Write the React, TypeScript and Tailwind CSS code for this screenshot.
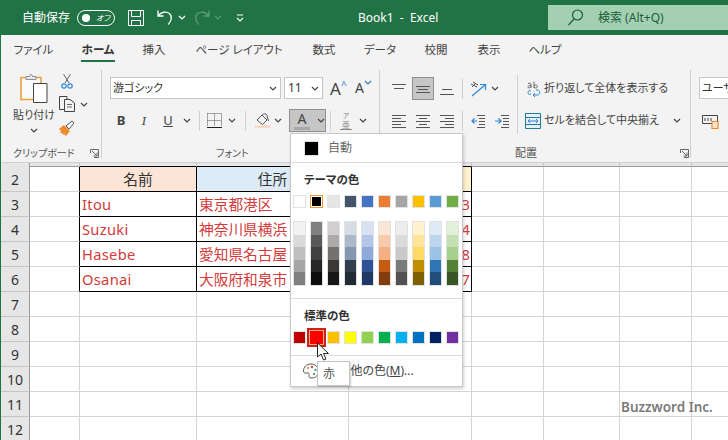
import React from "react";

const theme = [
  ["#ffffff", "#f2f2f2", "#d9d9d9", "#bfbfbf", "#a6a6a6", "#808080"],
  ["#000000", "#808080", "#595959", "#404040", "#262626", "#0d0d0d"],
  ["#e7e6e6", "#d0cece", "#aeaaaa", "#767171", "#3b3838", "#181717"],
  ["#44546a", "#d6dce4", "#adb9ca", "#8497b0", "#333f4f", "#222b35"],
  ["#4472c4", "#d9e2f3", "#b4c6e7", "#8eaadb", "#2f5496", "#1f3864"],
  ["#ed7d31", "#fbe5d5", "#f7caac", "#f4b083", "#c55a11", "#833c0b"],
  ["#a5a5a5", "#ededed", "#dbdbdb", "#c9c9c9", "#7b7b7b", "#525252"],
  ["#ffc000", "#fff2cc", "#fee599", "#ffd965", "#bf8f00", "#7f6000"],
  ["#5b9bd5", "#deeaf6", "#bdd6ee", "#9cc3e5", "#2e75b5", "#1e4e79"],
  ["#70ad47", "#e2efd9", "#c5e0b3", "#a8d08d", "#538135", "#375623"],
];
const standard = ["#c00000", "#ff0000", "#ffc000", "#ffff00", "#92d050", "#00b050", "#00b0f0", "#0070c0", "#002060", "#7030a0"];

const tabs = [
  { label: "ファイル", w: "w-[37px] ml-[14px]" },
  { label: "ホーム", w: "w-[34px] ml-[29px]", active: true },
  { label: "挿入", w: "w-[26px] ml-[26px]" },
  { label: "ページ レイアウト", w: "w-[86px] ml-[29px]" },
  { label: "数式", w: "w-[26px] ml-[29px]" },
  { label: "データ", w: "w-[32px] ml-[27px]" },
  { label: "校閲", w: "w-[26px] ml-[27px]" },
  { label: "表示", w: "w-[26px] ml-[27px]" },
  { label: "ヘルプ", w: "w-[32px] ml-[27px]" },
];

const tableRows: Record<number, string[]> = {
  3: ["Itou", "東京都港区", "3"],
  4: ["Suzuki", "神奈川県横浜", "4"],
  5: ["Hasebe", "愛知県名古屋", "8"],
  6: ["Osanai", "大阪府和泉市", "7"],
};

function Chev({ className = "", color = "#444" }: { className?: string; color?: string }) {
  return (
    <svg width="8" height="5" viewBox="0 0 8 5" className={className} fill="none" stroke={color} strokeWidth="1.2">
      <path d="M1 1l3 3 3-3" />
    </svg>
  );
}

function Lines({ rows }: { rows: [number, number, number][] }) {
  return (
    <svg width="14" height="14" viewBox="0 0 14 14" stroke="#555" strokeWidth="1" fill="none">
      {rows.map(([x1, x2, y]) => (
        <path key={y} d={`M${x1} ${y + 0.5}H${x2}`} />
      ))}
    </svg>
  );
}

function Sep({ className = "" }: { className?: string }) {
  return <div className={`w-px bg-[#cfcfcf] ${className}`} />;
}

function Launcher({ className = "" }: { className?: string }) {
  return (
    <svg width="9" height="9" viewBox="0 0 9 9" className={className} fill="none" stroke="#666" strokeWidth="1">
      <path d="M.5 4V.5H8.500V8.500H4" />
      <path d="M2 2l5 5M7 3.500V7H3.500" />
    </svg>
  );
}

function TitleBar() {
  return (
    <div className="flex h-[35px] items-center bg-[#217346] text-white">
      <span className="ml-[22px] w-[48px] text-[12px] whitespace-nowrap">自動保存</span>
      <div className="ml-[7px] flex h-[16px] w-[38px] items-center rounded-full border border-white pl-[4px]">
        <div className="h-[8px] w-[8px] rounded-full bg-white" />
        <span className="ml-[6px] text-[8px] italic leading-none whitespace-nowrap">オフ</span>
      </div>
      <svg width="16" height="16" viewBox="0 0 16 16" className="ml-[13px]" fill="none" stroke="#fff" strokeWidth="1">
        <path d="M.5.500H15.500V15.500H.5z" />
        <path d="M3.500.500V6.500H12.500V.500M3.500 15.500V10.500H12.500V15.500" />
      </svg>
      <svg width="16" height="17" viewBox="0 0 16 17" className="ml-[13px]" fill="none" stroke="#fff" strokeWidth="1.3">
        <path d="M1 1.500V7H6.500" />
        <path d="M1.500 6.500C4 3 9 2 12.500 4.500c3 3 2 8-1.500 11" />
      </svg>
      <Chev color="#fff" className="ml-[5px]" />
      <svg width="16" height="17" viewBox="0 0 16 17" className="ml-[8px]" fill="none" stroke="#5c9c79" strokeWidth="1.3">
        <path d="M15 1.500V7H9.500" />
        <path d="M14.500 6.500C12 3 7 2 3.500 4.500c-3 3-2 8 1.500 11" />
      </svg>
      <Chev color="#5c9c79" className="ml-[4px]" />
      <svg width="8" height="8" viewBox="0 0 8 8" className="ml-[14px]" fill="none" stroke="#fff" strokeWidth="1.2">
        <path d="M1 1H7M1 4l3 3 3-3" />
      </svg>
      <span className="ml-[114px] w-[86px] text-[12px] whitespace-nowrap">Book1&nbsp; -&nbsp; Excel</span>
      <div className="mb-[5px] ml-[104px] flex h-[25px] flex-1 self-end items-center bg-[#a3d0b3] text-[#1b5e3a]">
        <svg width="17" height="17" viewBox="0 0 17 17" className="ml-[19px]" fill="none" stroke="#1b5e3a" strokeWidth="1.2">
          <circle cx="10.500" cy="6" r="5" />
          <path d="M7 10L1.500 16" />
        </svg>
        <span className="ml-[14px] text-[12px] whitespace-nowrap">検索 (Alt+Q)</span>
      </div>
    </div>
  );
}

function Tabs() {
  return (
    <div className="flex h-[30px] text-[11.5px] text-[#444]">
      {tabs.map((t) => (
        <div key={t.label} className={`relative flex h-[30px] items-center justify-center pb-[1px] whitespace-nowrap ${t.w} ${t.active ? "font-bold text-[#333]" : ""}`}>
          {t.label}
          {t.active && <div className="absolute bottom-[3px] left-0 h-[2px] w-full bg-[#217346]" />}
        </div>
      ))}
    </div>
  );
}

function Clipboard() {
  return (
    <div className="flex h-[88px] w-[101px] shrink-0 flex-col border-r border-[#cfcfcf]">
      <div className="flex h-[76px] shrink-0">
        <div className="ml-[10px] flex w-[46px] flex-col items-center">
          <svg width="28" height="31" viewBox="0 0 28 31" className="mt-[2px]" fill="none">
            <path d="M1 5.500H21V27.500H1z" stroke="#e8a33d" strokeWidth="1.600" fill="#fafafa" />
            <path d="M6 7.500V4.500H9.500C10 1.500 12 1.500 12.500 4.500H16V7.500z" fill="#e8e8e8" stroke="#777" strokeWidth=".8" />
            <path d="M13.500 11.500H27V30.500H13.500z" fill="#fff" stroke="#444" strokeWidth="1" />
          </svg>
          <span className="mt-[4px] text-[11px] leading-[15px] text-[#444] whitespace-nowrap">貼り付け</span>
          <Chev className="mt-[6px]" />
        </div>
        <div className="flex w-[20px] flex-col items-center">
          <svg width="12" height="16" viewBox="0 0 12 16" className="mt-[3px]" fill="none">
            <path d="M2.500 1L8 10M9.500 1L4 10" stroke="#666" strokeWidth="1" />
            <circle cx="3" cy="13" r="2.200" stroke="#2b88d8" strokeWidth="1.200" />
            <circle cx="9" cy="13" r="2.200" stroke="#2b88d8" strokeWidth="1.200" />
          </svg>
          <svg width="16" height="16" viewBox="0 0 16 16" className="mt-[7px]" fill="none" stroke="#444" strokeWidth="1">
            <path d="M5 13.500H.5V.5H8V3" />
            <path d="M5.500 3.500H11L15.500 7V15.500H5.500z" fill="#f3f3f3" />
            <path d="M8 8.500H13M8 11H13" strokeWidth=".8" />
          </svg>
          <svg width="16" height="16" viewBox="0 0 16 16" className="mt-[8px]">
            <path d="M0 9l5-4 6 6-4 5-2-2-1 1-1-2-2 0 1-2z" fill="#ed8b2f" />
            <path d="M7 6l6-5 2 2-5 6z" fill="#fff" stroke="#555" strokeWidth="1" />
          </svg>
        </div>
        <Chev className="ml-[3px] mt-[32px]" />
      </div>
      <div className="flex h-[14px] shrink-0 items-center text-[10px] text-[#555]">
        <span className="ml-[12px] w-[60px] whitespace-nowrap">クリップボード</span>
        <Launcher className="ml-[17px]" />
      </div>
    </div>
  );
}

function FontGroup() {
  return (
    <div className="flex h-[88px] w-[278px] shrink-0 flex-col border-r border-[#cfcfcf] pl-[8px]">
      <div className="mt-[7px] flex h-[22px] shrink-0 items-center">
        <div className="flex h-[22px] w-[171px] items-center justify-between border border-[#c6c6c6] bg-white pl-[2px] pr-[3px] text-[11px] text-[#333]">
          <span className="whitespace-nowrap">游ゴシック</span>
          <Chev />
        </div>
        <div className="ml-[3px] flex h-[22px] w-[39px] items-center justify-between border border-[#c6c6c6] bg-white pl-[3px] pr-[3px] text-[12px] text-[#333]">
          <span>11</span>
          <Chev />
        </div>
        <div className="ml-[7px] flex w-[18px] items-start text-[17px] leading-none text-[#444]">
          A<span className="text-[#2b7cc0] text-[10px] leading-none">^</span>
        </div>
        <div className="ml-[7px] flex w-[18px] items-start text-[14px] leading-none text-[#444]">
          A
          <Chev color="#2b7cc0" className="mt-[-1px]" />
        </div>
      </div>
      <div className="mt-[10px] flex h-[23px] shrink-0 items-center text-[#444]">
        <div className="flex w-[22px] justify-center text-[13px] font-bold">B</div>
        <div className="flex w-[24px] justify-center font-serif text-[13px] italic">I</div>
        <div className="flex w-[24px] justify-center text-[13px] underline">U</div>
        <div className="flex w-[14px] justify-center"><Chev /></div>
        <Sep className="ml-[5px] h-[20px]" />
        <svg width="15" height="15" viewBox="0 0 15 15" className="ml-[7px]" fill="none" stroke="#555" strokeWidth="1" strokeDasharray="1 1">
          <path d="M.5.500H14.500M.5 7.500H14.500M.5.500V13M7.500.500V13M14.500.500V13" />
          <path d="M0 14.500H15" stroke="#222" strokeDasharray="none" />
        </svg>
        <div className="flex w-[20px] justify-center"><Chev /></div>
        <Sep className="ml-[3px] h-[20px]" />
        <svg width="15" height="15" viewBox="0 0 15 15" className="ml-[9px]" fill="none">
          <path d="M2 7l5-5 5 5-4.500 4.500z" stroke="#555" strokeWidth="1" />
          <path d="M7 2.500C8 0 12 .5 12 3l1.500 5" stroke="#555" strokeWidth="1" />
          <rect x="0" y="12.500" width="15" height="2.500" fill="#f9d6c6" stroke="none" />
        </svg>
        <div className="flex w-[16px] justify-center"><Chev /></div>
        <div className="ml-[3px] flex h-[23px] w-[37px] items-center border border-[#8e8e8e] bg-[#c6c6c6] pl-[4px]">
          <div className="flex w-[16px] flex-col items-center text-[14px] leading-[14px] text-[#444]">
            A
            <div className="mt-[1px] h-[3px] w-[16px] bg-[#a8a8a8]" />
          </div>
          <Chev className="ml-[7px]" />
        </div>
        <Sep className="ml-[4px] h-[20px]" />
        <div className="ml-[7px] flex w-[16px] flex-col items-center text-[#888]">
          <span className="text-[7px] leading-[8px]">ア</span>
          <span className="text-[8px] leading-[9px]">亜</span>
          <div className="h-px w-[12px] bg-[#888]" />
        </div>
        <div className="flex w-[18px] justify-center"><Chev /></div>
      </div>
      <div className="mt-[14px] flex h-[14px] shrink-0 items-center text-[10px] text-[#555]">
        <span className="ml-[106px] whitespace-nowrap">フォント</span>
      </div>
    </div>
  );
}

function AlignGroup() {
  return (
    <div className="flex h-[88px] w-[311px] shrink-0 flex-col border-r border-[#cfcfcf]">
      <div className="flex h-[76px] shrink-0">
        <div className="w-[137px] shrink-0">
          <div className="mt-[7px] flex h-[23px] items-center">
            <div className="ml-[12px]"><Lines rows={[[0, 14, 2], [2, 12, 6]]} /></div>
            <div className="ml-[6px] flex h-[23px] w-[22px] items-center justify-center border border-[#8e8e8e] bg-[#c6c6c6]">
              <Lines rows={[[0, 14, 4], [2, 12, 7], [0, 14, 10]]} />
            </div>
            <div className="ml-[6px]"><Lines rows={[[2, 12, 7], [0, 14, 12]]} /></div>
            <Sep className="ml-[8px] h-[20px]" />
            <svg width="17" height="16" viewBox="0 0 17 16" className="ml-[7px]" fill="none">
              <path d="M1 3l6 3M3 1l5 3M2 6l4-4" stroke="#555" strokeWidth="1" />
              <path d="M2 15L15 4M10 3.500H15.500V9" stroke="#2b88d8" strokeWidth="1.200" />
            </svg>
            <div className="flex w-[16px] justify-center"><Chev /></div>
          </div>
          <div className="mt-[9px] flex h-[23px] items-center">
            <div className="ml-[12px]"><Lines rows={[[0, 14, 1], [0, 9, 4], [0, 14, 7], [0, 9, 10], [0, 14, 13]]} /></div>
            <div className="ml-[10px]"><Lines rows={[[0, 14, 1], [3, 11, 4], [0, 14, 7], [3, 11, 10], [0, 14, 13]]} /></div>
            <div className="ml-[10px]"><Lines rows={[[0, 14, 1], [5, 14, 4], [0, 14, 7], [5, 14, 10], [0, 14, 13]]} /></div>
            <Sep className="ml-[8px] h-[20px]" />
            <svg width="14" height="14" viewBox="0 0 14 14" className="ml-[8px]" fill="none">
              <path d="M6 1.500H14M8 4.500H14M8 7.500H14M8 10.500H14M6 13.500H14" stroke="#555" strokeWidth="1" />
              <path d="M6 7H1M3.500 4.500L1 7l2.500 2.500" stroke="#2b88d8" strokeWidth="1.200" />
            </svg>
            <svg width="14" height="14" viewBox="0 0 14 14" className="ml-[10px]" fill="none">
              <path d="M6 1.500H14M8 4.500H14M8 7.500H14M8 10.500H14M6 13.500H14" stroke="#555" strokeWidth="1" />
              <path d="M0 7H6M3.500 4.500L6 7 3.500 9.500" stroke="#2b88d8" strokeWidth="1.200" />
            </svg>
          </div>
        </div>
        <Sep className="mt-[5px] h-[59px]" />
        <div className="flex-1 text-[11px] text-[#444]">
          <div className="mt-[7px] flex h-[23px] items-center pl-[9px]">
            <svg width="14" height="16" viewBox="0 0 14 16" fill="none">
              <path d="M1 2.500c2-1 3 0 3 1V7M4 4.500C2 4 1 5 1 6c0 1.200 2 1.200 3-.5M7 .5V7M7 4.500c1.500-1 3.500-.5 3.500 1S8.500 7.500 7 6.500" stroke="#555" strokeWidth=".9" />
              <path d="M4 10c-1.500-1-3-.3-3 1.500S2.500 14 4 13M6 14H10.500c3 0 3-5 0-5H9M8 12l-2 2 2 2" stroke="#2b88d8" strokeWidth="1" />
            </svg>
            <span className="ml-[3px] whitespace-nowrap">折り返して全体を表示する</span>
          </div>
          <div className="mt-[9px] flex h-[23px] items-center pl-[7px]">
            <svg width="16" height="16" viewBox="0 0 16 16" fill="none">
              <path d="M.5.500H15.500V15.500H.5z" stroke="#1f7a9c" strokeWidth="1" fill="#e5f1f5" />
              <path d="M.5 4.500H15.500M.5 11.500H15.500" stroke="#1f7a9c" strokeWidth="1" />
              <path d="M3 8H13M5 6L3 8l2 2M11 6l2 2-2 2" stroke="#2b88d8" strokeWidth="1" />
            </svg>
            <span className="ml-[3px] w-[124px] whitespace-nowrap">セルを結合して中央揃え</span>
            <Chev className="ml-[5px]" />
          </div>
        </div>
      </div>
      <div className="flex h-[14px] shrink-0 items-center text-[11px] text-[#555]">
        <span className="ml-[135px] w-[25px] whitespace-nowrap">配置</span>
        <Launcher className="ml-[140px]" />
      </div>
    </div>
  );
}

function NumberGroup() {
  return (
    <div className="ml-[8px] h-[88px] w-[60px] shrink-0 overflow-hidden">
      <div className="mt-[7px] flex h-[22px] w-[60px] items-center border border-[#c6c6c6] bg-white pl-[2px] text-[11px] text-[#333] whitespace-nowrap">
        ユーザー定義
      </div>
      <svg width="17" height="15" viewBox="0 0 17 15" className="ml-[3px] mt-[15px]" fill="none">
        <path d="M.5 1.500H15.500V9.500H.5z" stroke="#444" strokeWidth="1" />
        <path d="M3 4v3M6 4v3M9 4v3" stroke="#444" strokeWidth="1" />
        <path d="M10 7.500H16V14.500H10z" stroke="#ed8b2f" strokeWidth="1.200" fill="#fbe3c8" />
      </svg>
    </div>
  );
}

function Ribbon() {
  return (
    <div className="flex h-[98px] border-b border-[#d0d0d0] pt-[5px]">
      <Clipboard />
      <FontGroup />
      <AlignGroup />
      <NumberGroup />
    </div>
  );
}

function Sheet() {
  const rowNums = [2, 3, 4, 5, 6, 7, 8, 9, 10, 11, 12];
  const cols = "grid grid-cols-[29px_50px_117px_152px_123px_72px_76px_72px_1fr]";
  return (
    <div className="bg-white">
      <div className={`${cols} h-[4px] bg-[#e6e6e6]`}>
        <div className="border-r border-[#9b9b9b]" />
        {[0, 1, 2, 3, 4, 5, 6, 7].map((i) => (
          <div key={i} className={`border-b ${i >= 1 && i <= 3 ? "border-black" : "border-[#9b9b9b]"} ${i < 7 ? "border-r border-r-[#c4c4c4]" : ""}`} />
        ))}
      </div>
      {rowNums.map((n) => {
        const row = tableRows[n];
        const inTable = n >= 2 && n <= 6;
        const edge = inTable ? "border-black" : "border-[#d4d4d4]";
        const base = "flex h-[25px] items-center border-r border-b text-[14.7px] leading-none whitespace-nowrap overflow-hidden [font-feature-settings:normal]";
        return (
          <div key={n} className={cols}>
            <div className="flex h-[25px] items-center justify-center border-r border-b border-r-[#9b9b9b] border-b-[#c4c4c4] bg-[#e6e6e6] text-[14px] text-[#333]">
              {n}
            </div>
            <div className={`h-[25px] border-b border-r border-b-[#d4d4d4] ${inTable ? "border-r-black" : "border-r-[#d4d4d4]"}`} />
            <div className={`${base} ${edge} ${n === 2 ? "justify-center bg-[#fce4d6] text-[#333]" : "pl-[2px] tracking-[0.3px] text-[#d33a3a]"}`}>
              {n === 2 ? "名前" : row?.[0]}
            </div>
            <div className={`${base} ${edge} ${n === 2 ? "justify-center bg-[#ddebf7] text-[#333]" : "pl-[2px] text-[#d33a3a]"}`}>
              {n === 2 ? "住所" : row?.[1]}
            </div>
            <div className={`${base} ${edge} justify-end pr-[1px] ${n === 2 ? "bg-[#fff2cc]" : "text-[#d33a3a]"}`}>
              {row?.[2]}
            </div>
            {[0, 1, 2].map((i) => (
              <div key={i} className="h-[25px] border-r border-b border-[#d4d4d4]" />
            ))}
            <div className="h-[25px] border-b border-[#d4d4d4]" />
          </div>
        );
      })}
    </div>
  );
}

function Swatch({ color, selected }: { color: string; selected?: boolean }) {
  if (selected) {
    return (
      <div className="h-[13px] w-[13px] border border-[#f29436] bg-white p-px">
        <div className="h-full w-full" style={{ backgroundColor: color }} />
      </div>
    );
  }
  return <div className="h-[13px] w-[13px] border border-[#e2e2e2]" style={{ backgroundColor: color }} />;
}

function ColorMenu() {
  return (
    <div className="absolute left-[290px] top-[133px] h-[254px] w-[173px] border border-[#c8c8c8] bg-white shadow-[1px_2px_3px_rgba(0,0,0,0.18)]">
      <div className="flex h-[29px] items-center border-b border-[#dcdcdc] pl-[13px]">
        <div className="h-[15px] w-[15px] border border-[#e2e2e2] bg-black" />
        <span className="ml-[9px] text-[12px] text-[#666]">自動</span>
      </div>
      <div className="flex h-[31px] items-center pl-[13px] pt-[3px] text-[11.5px] font-bold text-[#333]">テーマの色</div>
      <div className="mt-px flex gap-[4px] pl-[2px]">
        {theme.map((c, i) => (
          <Swatch key={c[0]} color={c[0]} selected={i === 1} />
        ))}
      </div>
      <div className="mt-[13px] flex gap-[4px] pl-[2px]">
        {theme.map((c) => (
          <div key={c[0]} className="w-[13px] border border-[#e2e2e2]">
            {c.slice(1).map((s, i) => (
              <div key={i} className="h-[12.6px]" style={{ backgroundColor: s }} />
            ))}
          </div>
        ))}
      </div>
      <div className="mt-[12px] border-b border-[#dcdcdc]" />
      <div className="flex h-[31px] items-center pl-[13px] pt-[3px] text-[11.5px] font-bold text-[#333]">標準の色</div>
      <div className="mt-px flex gap-[4px] pl-[2px]">
        {standard.map((c, i) => (
          <div key={c} className="relative">
            <Swatch color={c} selected={false} />
            {i === 1 && (
              <div className="absolute -inset-[3px] flex items-center justify-center border-2 border-[#cf1f1a]">
                <div className="h-[15px] w-[15px] border border-[#f3b27a] bg-[#ff0000]" />
              </div>
            )}
          </div>
        ))}
      </div>
      <div className="mt-[11px] border-b border-[#dcdcdc]" />
      <div className="flex h-[30px] items-center pl-[12px] text-[#444]">
        <svg width="16" height="16" viewBox="0 0 16 16" fill="none">
          <path d="M8 1C3.500 1 .5 4 .5 8c0 2 2 2.500 3.500 2 2-.5 2.500 1 2 2.500C5.500 14.500 7 15 9 15c4 0 6.500-3 6.500-7S12 1 8 1z" stroke="#555" strokeWidth="1" />
          <circle cx="5" cy="5" r="1.200" fill="#e8a33d" />
          <circle cx="9" cy="4" r="1.200" fill="#c0504d" />
          <circle cx="12.500" cy="7" r="1.200" fill="#5b9bd5" />
          <circle cx="11" cy="11" r="1.200" fill="#70ad47" />
        </svg>
        <span className="ml-[9px] text-[12px] whitespace-nowrap">
          その他の色(<span className="underline">M</span>)...
        </span>
      </div>
    </div>
  );
}

export default function App() {
  return (
    <div className="relative h-[440px] w-[728px] overflow-hidden bg-[#f3f3f3] font-['Noto_Sans','Noto_Sans_CJK_JP',sans-serif] [font-feature-settings:'palt']">
      <TitleBar />
      <div className="border-l border-[#217346]">
        <Tabs />
        <Ribbon />
        <Sheet />
      </div>
      <ColorMenu />
      <div className="absolute left-[317px] top-[361px] flex h-[25px] w-[33px] items-center border border-[#c4c4c4] bg-white pl-[5px] text-[12px] text-[#555] shadow-[1px_1px_2px_rgba(0,0,0,0.2)]">
        赤
      </div>
      <svg width="14" height="19" viewBox="0 0 14 19" className="absolute left-[316px] top-[342px]">
        <path d="M1.500 1V15L5 12l2.500 6 2.500-1-2.500-5.500H12.500z" fill="#fff" stroke="#222" strokeWidth="1" />
      </svg>
      <div className="absolute left-[621px] top-[397px] text-[13.5px] font-semibold text-[#7a7a7a]">Buzzword Inc.</div>
    </div>
  );
}
